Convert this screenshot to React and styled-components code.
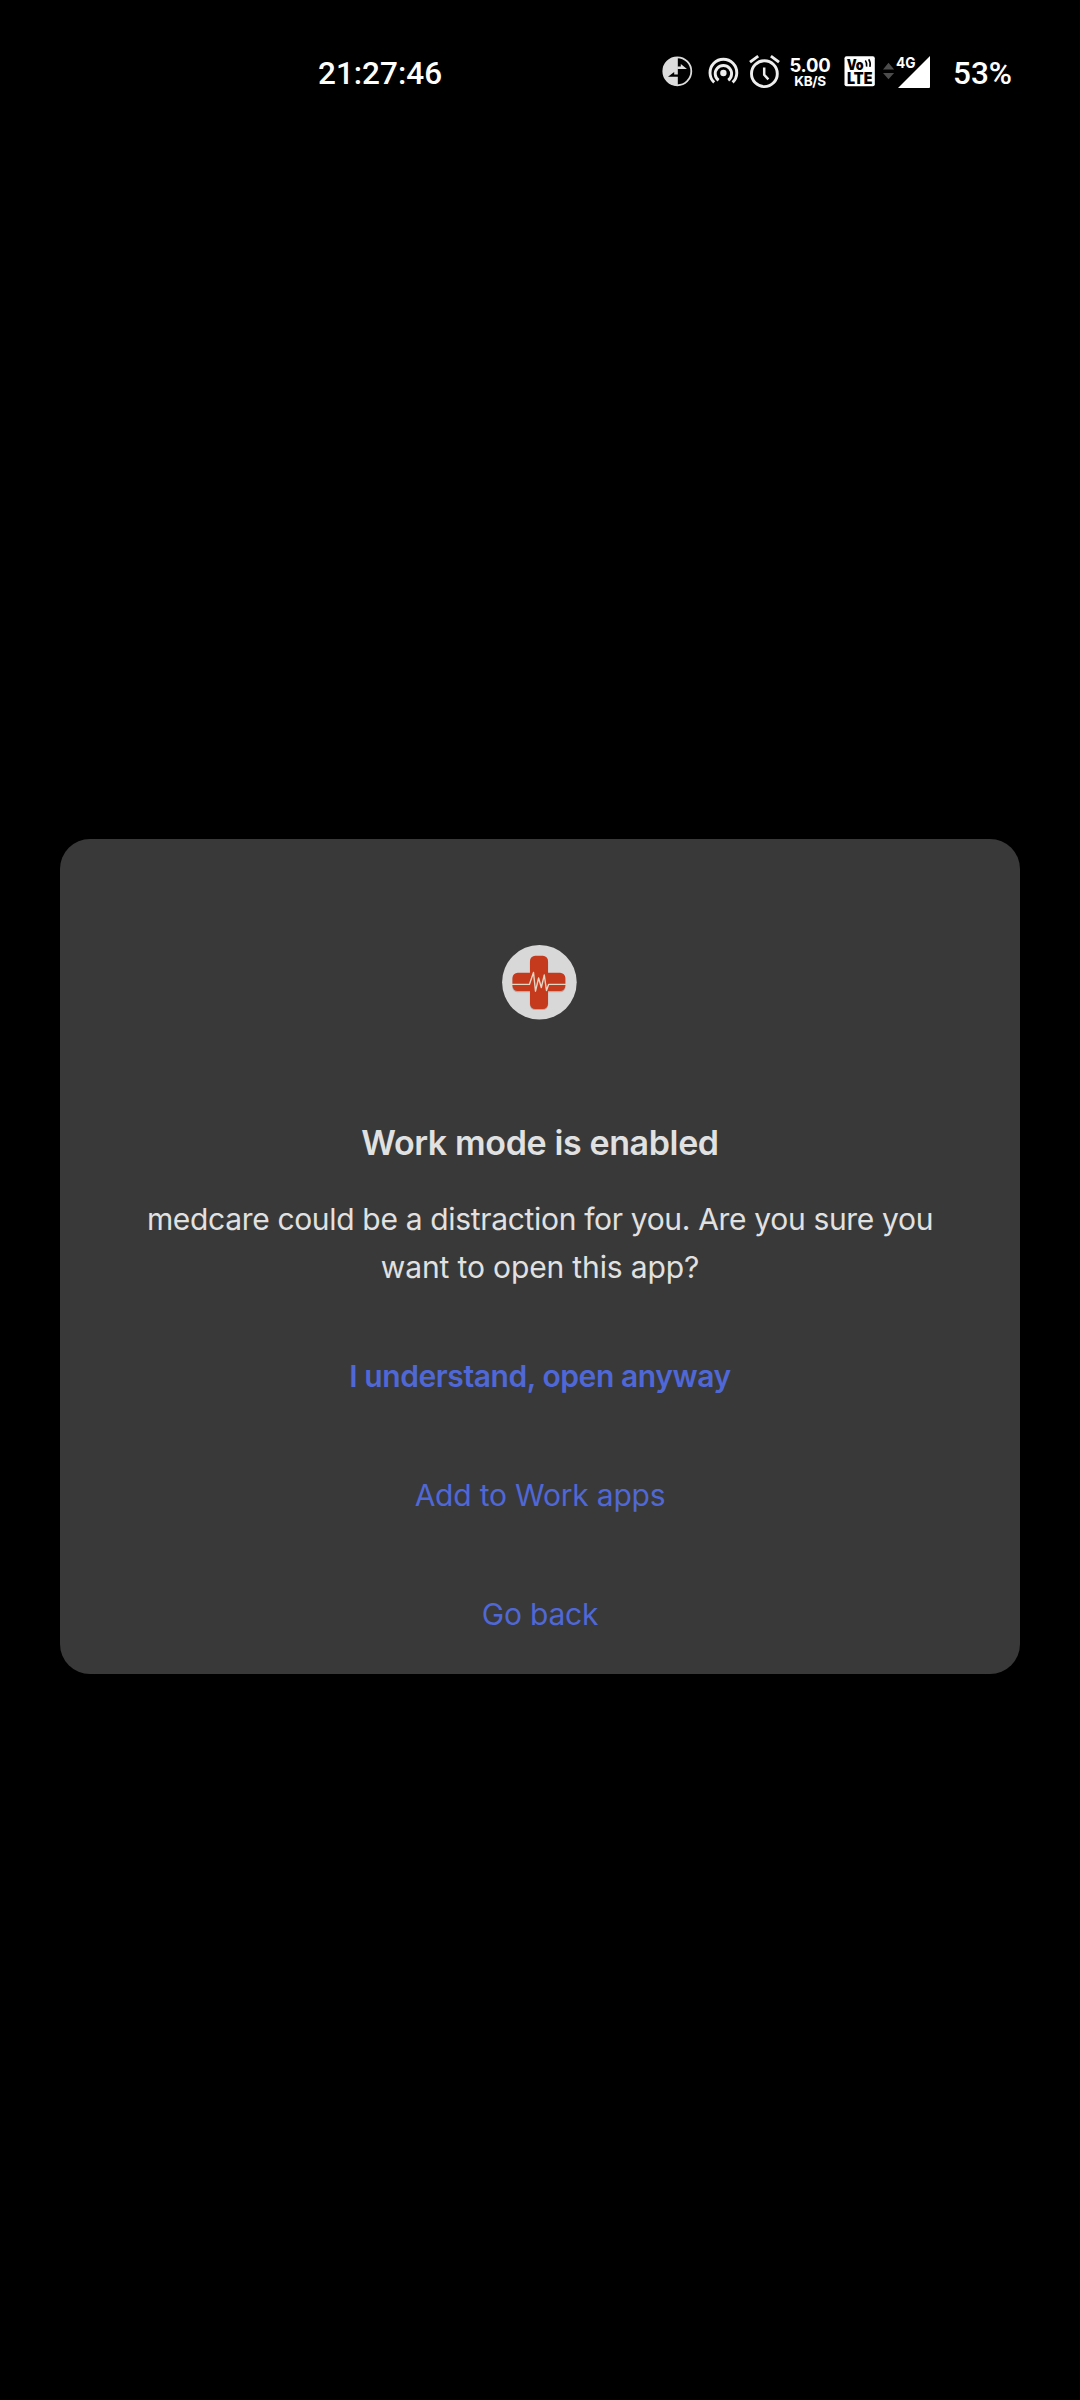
import React from "react";
import styled, { createGlobalStyle } from "styled-components";

const GlobalStyle = createGlobalStyle`
  * { box-sizing: border-box; }
  body { margin: 0; background: #000; }
`;

const Screen = styled.main`
  display: flex;
  flex-direction: column;
  height: 2400px;
  width: 1080px;
  overflow: hidden;
  background: #000;
  font-family: Inter, "Liberation Sans", sans-serif;
`;

const StatusBar = styled.header`
  display: flex;
  align-items: flex-start;
  justify-content: space-between;
  height: 144px;
  padding: 51px 68px 0 318px;
  color: #fff;
`;

const StatusText = styled.span`
  font: 500 31.5px/45px Roboto, sans-serif;
  white-space: nowrap;
`;

const StatusGroup = styled.div`
  display: flex;
  align-items: flex-start;
`;

const StatusIcon = styled.svg`
  display: block;
  flex: none;
  height: 44px;
  width: ${(p) => p.$width}px;
  margin-top: -1px;
  margin-right: ${(p) => p.$gap || 0}px;
`;

const NetSpeed = styled.div`
  display: flex;
  flex-direction: column;
  align-items: center;
  width: 44px;
  margin-right: 12px;
  padding-top: 5px;
  white-space: nowrap;
`;

const SpeedValue = styled.span`
  font-size: 18.5px;
  font-weight: 700;
  line-height: 19px;
  letter-spacing: -0.2px;
`;

const SpeedUnit = styled.span`
  font-size: 13.5px;
  font-weight: 700;
  line-height: 13px;
  letter-spacing: -0.3px;
`;

const Dialog = styled.section`
  display: flex;
  flex-direction: column;
  align-items: center;
  width: 960px;
  height: 835px;
  margin: 695px 60px 0;
  padding-top: 103px;
  border-radius: 30px;
  background: #393939;
`;

const AppIcon = styled.svg`
  display: block;
  width: 80px;
  height: 80px;
`;

const Title = styled.h1`
  margin: 99px 0 0;
  color: #e1e1e1;
  font-size: 34px;
  font-weight: 600;
  line-height: 44px;
  letter-spacing: -0.37px;
  white-space: nowrap;
`;

const Message = styled.p`
  display: flex;
  flex-direction: column;
  align-items: center;
  margin: 30px 0 0;
  color: #e1e1e1;
  font-size: 30px;
  line-height: 48px;
  white-space: nowrap;
`;

const MessageLine = styled.span`
  letter-spacing: ${(p) => p.$spacing}px;
`;

const Actions = styled.div`
  display: flex;
  flex-direction: column;
  align-items: center;
  margin-top: 25px;
`;

const Action = styled.button`
  height: 119px;
  padding: 0;
  border: 0;
  background: none;
  color: #5068d6;
  font-family: inherit;
  font-size: 30px;
  font-weight: ${(p) => (p.$primary ? 600 : 400)};
  letter-spacing: ${(p) => (p.$primary ? "-0.42px" : "-0.2px")};
  white-space: nowrap;
`;

function DataSaverIcon() {
  return (
    <StatusIcon $width={32} $gap={14} viewBox="661 50 32 44">
      <circle cx="677.3" cy="71.3" r="14" fill="none" stroke="#dcdcdc" strokeWidth="1.8" />
      <path d="M677.8 57a14.3 14.3 0 0 0 0 28.6z" fill="#dcdcdc" />
      <path d="M668 76.8l6.2-4.8v2.4h3.8v2.4z" fill="#000" />
      <path d="M677.3 69h9.7l-6.2-5v2.6h-3.5z" fill="#dcdcdc" />
    </StatusIcon>
  );
}

function HotspotIcon() {
  return (
    <StatusIcon $width={32} $gap={9} viewBox="707 50 32 44">
      <circle cx="723.4" cy="73" r="3.2" fill="#eee" />
      <g fill="none" stroke="#eee" strokeWidth="2.9">
        <path d="M718.6 80.3a8.2 8.2 0 1 1 9.6 0" />
        <path d="M714.2 82.4a13.4 13.4 0 1 1 18.4 0" />
      </g>
    </StatusIcon>
  );
}

function AlarmIcon() {
  return (
    <StatusIcon $width={34} $gap={6} viewBox="748 50 34 44">
      <g fill="none" stroke="#eee" strokeWidth="2.9">
        <circle cx="764.4" cy="73.7" r="12.9" />
        <path d="M764.2 67.5v7.3l4.2 4.6" strokeWidth="2.5" />
        <path d="M750 62.2l8.2-6.1M770.9 56.1l8.1 6.1" />
      </g>
    </StatusIcon>
  );
}

const IconText = styled.text`
  font-family: Inter, sans-serif;
  font-weight: ${(p) => p.$weight};
  font-size: ${(p) => p.$size}px;
`;

function VolteIcon() {
  return (
    <StatusIcon $width={32} $gap={7} viewBox="844 50 32 44">
      <rect x="844.5" y="56.3" width="30.3" height="30" rx="2" fill="#fff" />
      <IconText x="846.7" y="69.8" $weight={900} $size={14.5} textLength="17" lengthAdjust="spacingAndGlyphs">Vo</IconText>
      <IconText x="847" y="83.6" $weight={900} $size={15.5} textLength="25.5" lengthAdjust="spacingAndGlyphs">LTE</IconText>
      <path d="M865.3 60.6q2 2.6 1.3 6M868.7 59.3q2.2 3.4 1.2 7.6" fill="none" stroke="#000" strokeWidth="1.6" />
    </StatusIcon>
  );
}

function SignalIcon() {
  return (
    <StatusIcon $width={48} $gap={22} viewBox="883 50 48 44">
      <path d="M883 69.5l5.5-6.7 5.6 6.7zM883 73l5.5 6.3 5.6-6.3z" fill="#4c4c4c" />
      <path d="M898 88l32-32v31q0 1-1 1z" fill="#fff" />
      <IconText x="896" y="68" fill="#fff" $weight={700} $size={15} textLength="19.5" lengthAdjust="spacingAndGlyphs">4G</IconText>
    </StatusIcon>
  );
}

function MedcareIcon() {
  return (
    <AppIcon viewBox="500 942 80 80">
      <circle cx="539.4" cy="982.3" r="37.3" fill="#d8d8d8" />
      <g fill="#b9aaa5" transform="translate(0 1)">
        <rect x="529.8" y="955.5" width="18.4" height="53.6" rx="5.4" />
        <rect x="512.3" y="972.7" width="53.2" height="18.6" rx="5.4" />
      </g>
      <g fill="#c5391d">
        <rect x="530" y="955.8" width="18" height="53.1" rx="5.2" />
        <rect x="512.5" y="972.8" width="52.8" height="18.1" rx="5.2" />
      </g>
      <path
        d="M509.5 984.4H529.4L533.5 972.5 535.5 991.2 538.6 978 541.3 987.5 544.3 975 546.5 990.5 548.6 984.4H568.5"
        fill="none"
        stroke="#e2d6c4"
        strokeWidth="1.4"
        strokeLinejoin="round"
      />
    </AppIcon>
  );
}

export default function App() {
  return (
    <Screen>
      <GlobalStyle />
      <StatusBar>
        <StatusText>21:27:46</StatusText>
        <StatusGroup>
          <DataSaverIcon />
          <HotspotIcon />
          <AlarmIcon />
          <NetSpeed>
            <SpeedValue>5.00</SpeedValue>
            <SpeedUnit>KB/S</SpeedUnit>
          </NetSpeed>
          <VolteIcon />
          <SignalIcon />
          <StatusText>53%</StatusText>
        </StatusGroup>
      </StatusBar>
      <Dialog>
        <MedcareIcon />
        <Title>Work mode is enabled</Title>
        <Message>
          <MessageLine $spacing={-0.33}>medcare could be a distraction for you. Are you sure you</MessageLine>
          <MessageLine $spacing={-0.14}>want to open this app?</MessageLine>
        </Message>
        <Actions>
          <Action $primary>I understand, open anyway</Action>
          <Action>Add to Work apps</Action>
          <Action>Go back</Action>
        </Actions>
      </Dialog>
    </Screen>
  );
}
